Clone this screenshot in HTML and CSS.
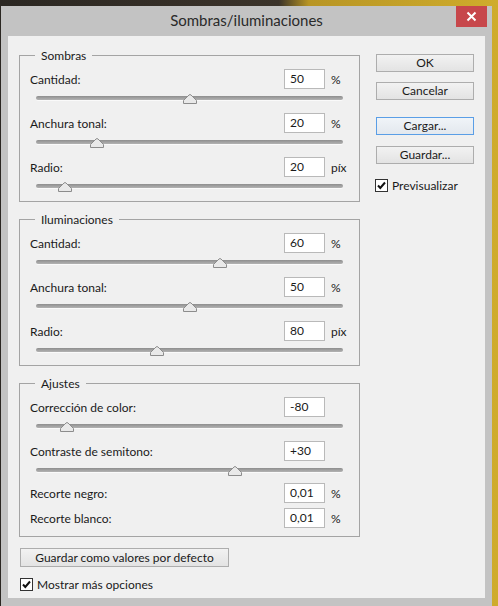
FILE: index.html
```html
<!DOCTYPE html>
<html lang="es">
<head>
<meta charset="utf-8">
<title>Sombras/iluminaciones</title>
<link rel="stylesheet" href="styles.css">
</head>
<body>
<div class="window">
  <div class="titlebar">
    <span class="spacer"></span>
    <div class="title">Sombras/iluminaciones</div>
    <div class="close">
      <svg width="31" height="21" viewBox="0 0 31 21"><path d="M11.5 6.5 L19.5 14.5 M19.5 6.5 L11.5 14.5" stroke="#fff" stroke-width="2" fill="none"/></svg>
    </div>
  </div>
  <div class="content">
    <div class="left">
      <div class="group">
        <div class="legend">Sombras</div>
        <div class="rows">
          <div class="row"><span class="label">Cantidad:</span><span class="field">50</span><span class="unit">%</span></div>
          <div class="slider"><div class="track"></div><svg class="thumb" style="left:147px" width="14" height="10" viewBox="0 0 14 10"><path d="M0.5 9.5 V6.5 L6 1 Q7 0 8 1 L13.5 6.5 V9.5 Z"/></svg></div>
          <div class="row"><span class="label">Anchura tonal:</span><span class="field">20</span><span class="unit">%</span></div>
          <div class="slider"><div class="track"></div><svg class="thumb" style="left:54px" width="14" height="10" viewBox="0 0 14 10"><path d="M0.5 9.5 V6.5 L6 1 Q7 0 8 1 L13.5 6.5 V9.5 Z"/></svg></div>
          <div class="row"><span class="label">Radio:</span><span class="field">20</span><span class="unit">píx</span></div>
          <div class="slider"><div class="track"></div><svg class="thumb" style="left:22px" width="14" height="10" viewBox="0 0 14 10"><path d="M0.5 9.5 V6.5 L6 1 Q7 0 8 1 L13.5 6.5 V9.5 Z"/></svg></div>
        </div>
      </div>
      <div class="group">
        <div class="legend">Iluminaciones</div>
        <div class="rows">
          <div class="row"><span class="label">Cantidad:</span><span class="field">60</span><span class="unit">%</span></div>
          <div class="slider"><div class="track"></div><svg class="thumb" style="left:177px" width="14" height="10" viewBox="0 0 14 10"><path d="M0.5 9.5 V6.5 L6 1 Q7 0 8 1 L13.5 6.5 V9.5 Z"/></svg></div>
          <div class="row"><span class="label">Anchura tonal:</span><span class="field">50</span><span class="unit">%</span></div>
          <div class="slider"><div class="track"></div><svg class="thumb" style="left:147px" width="14" height="10" viewBox="0 0 14 10"><path d="M0.5 9.5 V6.5 L6 1 Q7 0 8 1 L13.5 6.5 V9.5 Z"/></svg></div>
          <div class="row"><span class="label">Radio:</span><span class="field">80</span><span class="unit">píx</span></div>
          <div class="slider"><div class="track"></div><svg class="thumb" style="left:114px" width="14" height="10" viewBox="0 0 14 10"><path d="M0.5 9.5 V6.5 L6 1 Q7 0 8 1 L13.5 6.5 V9.5 Z"/></svg></div>
        </div>
      </div>
      <div class="group ajustes">
        <div class="legend">Ajustes</div>
        <div class="rows">
          <div class="row"><span class="label">Corrección de color:</span><span class="field">-80</span><span class="unit"></span></div>
          <div class="slider"><div class="track"></div><svg class="thumb" style="left:24px" width="14" height="10" viewBox="0 0 14 10"><path d="M0.5 9.5 V6.5 L6 1 Q7 0 8 1 L13.5 6.5 V9.5 Z"/></svg></div>
          <div class="row"><span class="label">Contraste de semitono:</span><span class="field">+30</span><span class="unit"></span></div>
          <div class="slider short"><div class="track"></div><svg class="thumb" style="left:192px" width="14" height="10" viewBox="0 0 14 10"><path d="M0.5 9.5 V6.5 L6 1 Q7 0 8 1 L13.5 6.5 V9.5 Z"/></svg></div>
          <div class="row"><span class="label">Recorte negro:</span><span class="field">0,01</span><span class="unit">%</span></div>
          <div class="row second"><span class="label">Recorte blanco:</span><span class="field">0,01</span><span class="unit">%</span></div>
        </div>
      </div>
      <div class="btn defaults">Guardar como valores por defecto</div>
      <div class="check more">
        <svg class="box" width="13" height="13" viewBox="0 0 13 13"><rect x="0.5" y="0.5" width="12" height="12" fill="#fff" stroke="#333"/><path d="M3 6.5 L5.3 9 L10 3.5" stroke="#111" stroke-width="2" fill="none"/></svg>
        <span>Mostrar más opciones</span>
      </div>
    </div>
    <div class="right">
      <div class="btn">OK</div>
      <div class="btn cancel">Cancelar</div>
      <div class="btn load">Cargar...</div>
      <div class="btn save">Guardar...</div>
      <div class="check preview">
        <svg class="box" width="13" height="13" viewBox="0 0 13 13"><rect x="0.5" y="0.5" width="12" height="12" fill="#fff" stroke="#333"/><path d="M3 6.5 L5.3 9 L10 3.5" stroke="#111" stroke-width="2" fill="none"/></svg>
        <span>Previsualizar</span>
      </div>
    </div>
  </div>
</div>
</body>
</html>
```

FILE: styles.css
```css
html, body {
  margin: 0;
  padding: 0;
}
body {
  width: 498px;
  height: 606px;
  overflow: hidden;
  background: linear-gradient(to right, #2b2722 0, #3b332a 56%, #b89524 62%, #cfac2c 100%);
  font-family: Lato, "Open Sans", sans-serif;
  font-size: 12px;
  color: #1a1a1a;
}
.window {
  margin: 6px 0 0 1px;
  width: 491px;
  height: 600px;
  box-sizing: border-box;
  background: #c3c3c3;
  padding: 0 7px 8px 7px;
  display: flex;
  flex-direction: column;
}
.titlebar {
  height: 30px;
  flex: none;
  display: grid;
  grid-template-columns: 1fr auto 1fr;
  margin: 0 -7px;
}
.title {
  font-size: 15px;
  color: #2a2a2a;
  line-height: 30px;
  margin-top: -1px;
}
.close {
  justify-self: end;
  align-self: start;
  width: 31px;
  height: 21px;
  margin-right: 5px;
  background: #c7474b;
}
.close svg {
  display: block;
}
.content {
  flex: 1;
  min-height: 0;
  background: #f0f0f0;
  display: flex;
  align-items: flex-start;
}
.left {
  margin-left: 11px;
  width: 341px;
  padding-top: 19px;
}
.group {
  border: 1px solid #a4a4a4;
  padding: 0 0 0 10px;
}
.group + .group {
  margin-top: 17px;
}
.legend {
  width: fit-content;
  height: 18px;
  line-height: 18px;
  margin: -9px 0 -9px 5px;
  padding: 0 6px;
  background: #f0f0f0;
}
.rows {
  padding-top: 13px;
}
.ajustes .rows {
  padding-bottom: 8px;
}
.row {
  display: grid;
  grid-template-columns: 1fr 41px 34px;
  height: 20px;
  align-items: center;
}
.row.second {
  margin-top: 5px;
}
.field {
  height: 20px;
  box-sizing: border-box;
  border: 1px solid #b9b9b9;
  background: #fff;
  padding-left: 5px;
  line-height: 18px;
}
.unit {
  padding-left: 6px;
}
.slider {
  position: relative;
  height: 24px;
  box-sizing: border-box;
  padding-top: 7px;
  width: 307px;
  margin-left: 6px;
}
.slider.short {
  height: 22px;
}
.track {
  height: 4px;
  border-radius: 2px;
  background: linear-gradient(#8e8e8e, #b3b3b3);
  box-shadow: 0 1px 0 #fafafa;
}
.thumb {
  position: absolute;
  top: 5px;
  display: block;
}
.thumb path {
  fill: #e9e9e9;
  stroke: #8c8c8c;
  stroke-width: 1;
}
.btn {
  height: 18px;
  box-sizing: border-box;
  border: 1px solid #adadad;
  background: linear-gradient(#f2f2f2, #e3e3e3);
  text-align: center;
  line-height: 16px;
}
.defaults {
  margin: 11px 0 0 1px;
  width: 209px;
  height: 19px;
  line-height: 17px;
}
.check {
  display: flex;
  align-items: center;
  height: 14px;
}
.check .box {
  display: block;
  flex: none;
}
.check span {
  margin-left: 4px;
}
.more {
  margin: 10px 0 0 1px;
}
.right {
  margin-left: 16px;
  width: 98px;
  padding-top: 18px;
}
.cancel {
  margin-top: 10px;
}
.load {
  margin-top: 17px;
  border-color: #5a9ee6;
  background: linear-gradient(#f0f4f8, #e3e8ee);
}
.save {
  margin-top: 11px;
}
.preview {
  margin-top: 14px;
  margin-left: -1px;
}
```
